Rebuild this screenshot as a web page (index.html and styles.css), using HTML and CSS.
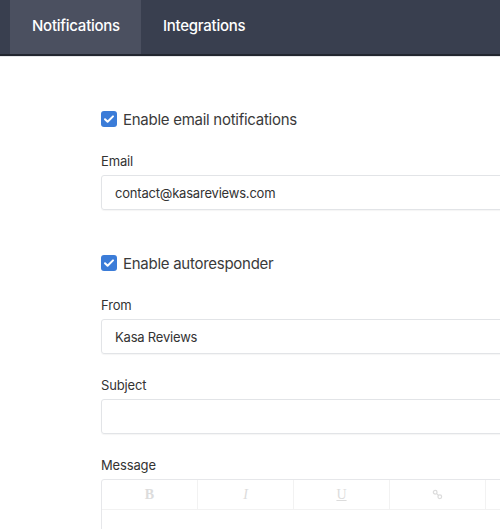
FILE: index.html
```html
<!DOCTYPE html>
<html>
<head>
<meta charset="utf-8">
<link rel="stylesheet" href="styles.css">
</head>
<body>
<nav class="tabs">
  <div class="tab active">Notifications</div>
  <div class="tab">Integrations</div>
</nav>
<main class="content">
  <label class="check-row">
    <span class="checkbox"><svg viewBox="0 0 16 16" width="16" height="16"><path d="M4 8.2l2.6 2.6L12 5.4" fill="none" stroke="#fff" stroke-width="2" stroke-linecap="round" stroke-linejoin="round"/></svg></span>
    <span class="check-label">Enable email notifications</span>
  </label>
  <div class="field first">
    <div class="field-label">Email</div>
    <div class="input">contact@kasareviews.com</div>
  </div>
  <label class="check-row second">
    <span class="checkbox"><svg viewBox="0 0 16 16" width="16" height="16"><path d="M4 8.2l2.6 2.6L12 5.4" fill="none" stroke="#fff" stroke-width="2" stroke-linecap="round" stroke-linejoin="round"/></svg></span>
    <span class="check-label">Enable autoresponder</span>
  </label>
  <div class="field first">
    <div class="field-label">From</div>
    <div class="input">Kasa Reviews</div>
  </div>
  <div class="field">
    <div class="field-label">Subject</div>
    <div class="input"></div>
  </div>
  <div class="field">
    <div class="field-label">Message</div>
    <div class="editor">
      <div class="toolbar">
        <div class="tool bold">B</div>
        <div class="tool ital">I</div>
        <div class="tool under">U</div>
        <div class="tool"><svg viewBox="0 0 12 12" width="11" height="11"><g fill="none" stroke="#dcdcdc" stroke-width="1.4"><circle cx="3.5" cy="3.5" r="2"/><circle cx="8.5" cy="8.5" r="2"/><path d="M5 5l2 2"/></g></svg></div>
        <div class="tool"></div>
      </div>
      <div class="editor-body"></div>
    </div>
  </div>
</main>
</body>
</html>
```
FILE: styles.css
```css
html, body {
  margin: 0;
  padding: 0;
  overflow: hidden;
  background: #ffffff;
  font-family: Inter, "Noto Sans", sans-serif;
  color: #333;
}
.tabs {
  display: flex;
  height: 54px;
  padding-left: 10px;
  background: #393f4f;
  border-bottom: 2px solid #22262f;
}
.tab {
  padding: 0 21px 0 22px;
  display: flex;
  align-items: center;
  color: #ffffff;
  font-size: 15px;
  font-weight: 500;
  letter-spacing: -0.25px;
  padding-bottom: 4px;
}
.tab.active {
  background: #4b5060;
}
.content {
  padding: 52px 0 0 101px;
  width: 560px;
  border-top: 1px solid #e6e7ea;
}
.check-row {
  display: flex;
  align-items: center;
  height: 20px;
  gap: 6px;
}
.check-row.second {
  margin-top: 43px;
}
.checkbox {
  width: 16px;
  height: 16px;
  border-radius: 3px;
  background: #3b7cd8;
  display: flex;
}
.check-label {
  font-size: 15px;
  letter-spacing: -0.27px;
  color: #3a3a3a;
}
.field {
  margin-top: 22px;
}
.field.first {
  margin-top: 23px;
}
.field-label {
  font-size: 13px;
  line-height: 18px;
  color: #333;
  margin-bottom: 5px;
  letter-spacing: -0.15px;
}
.input {
  height: 33px;
  border: 1px solid #e2e4e7;
  border-radius: 3px;
  box-shadow: 0 1px 1px rgba(0,0,0,0.04);
  padding: 0 13px;
  display: flex;
  align-items: center;
  font-size: 13px;
  letter-spacing: -0.2px;
  color: #333;
}
.editor {
  border: 1px solid #e6e7ea;
  border-radius: 3px;
  height: 80px;
}
.toolbar {
  display: flex;
  height: 29px;
  border-bottom: 1px solid #f2f2f2;
}
.tool {
  width: 95px;
  border-right: 1px solid #f2f2f2;
  display: flex;
  align-items: center;
  justify-content: center;
  font-family: "Liberation Serif", serif;
  font-size: 14px;
  color: #dcdcdc;
}
.tool.bold { font-weight: bold; }
.tool.ital { font-style: italic; }
.tool.under { text-decoration: underline; }
```
